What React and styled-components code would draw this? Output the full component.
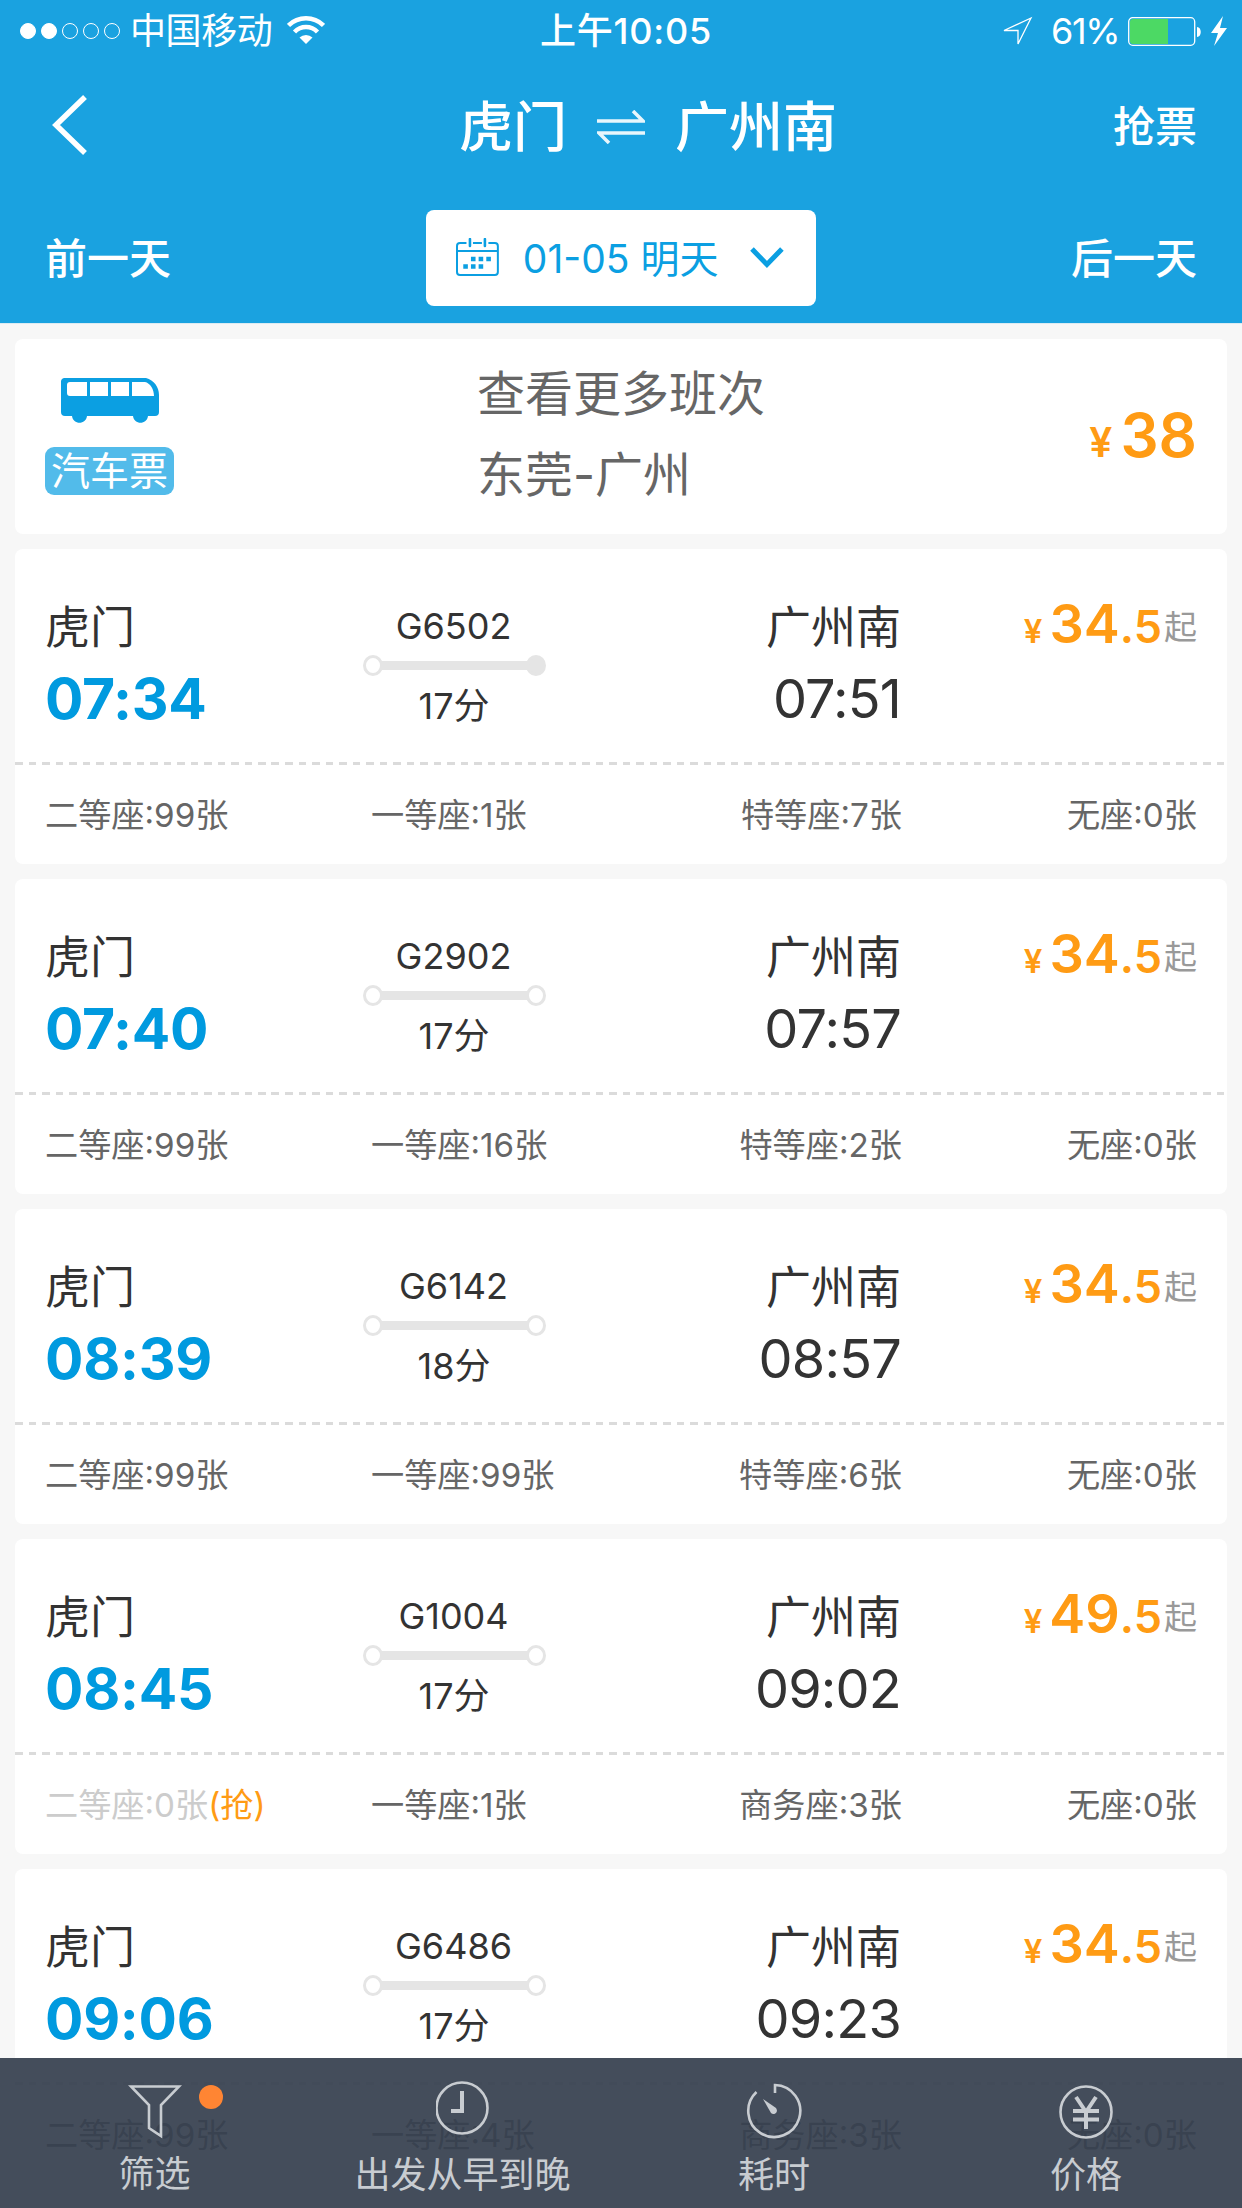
import React from 'react'
import styled, { createGlobalStyle } from 'styled-components'

const GlobalStyle = createGlobalStyle`
  *,
  *::before,
  *::after {
    box-sizing: border-box;
  }
  body {
    margin: 0;
    background: #f7f7f7;
    font-family: Inter, "Noto Sans CJK SC", sans-serif;
    overflow: hidden;
  }
`

const Screen = styled.div`
  position: relative;
  width: 1242px;
  height: 2208px;
  overflow: hidden;
  background: #f7f7f7;
`

const Header = styled.header`
  height: 324px;
  background: #1aa2e0;
  border-bottom: 1px solid #dcebf2;
  color: #fff;
`

const StatusBar = styled.div`
  display: grid;
  grid-template-columns: 1fr auto 1fr;
  align-items: center;
  height: 62px;
  padding: 0 14px 0 20px;
  font-size: 36px;
  line-height: 62px;
`

const Carrier = styled.div`
  display: flex;
  align-items: center;
  letter-spacing: -0.4px;
`

const Signal = styled.div`
  display: flex;
  gap: 5px;
  margin-right: 10px;
`

const Dot = styled.i`
  width: 16px;
  height: 16px;
  border: 1px solid #fff;
  border-radius: 50%;
  background: ${(props) => (props.$on ? '#fff' : 'transparent')};
`

const Clock = styled.div`
  padding-left: 4px;
  font-weight: 500;
  letter-spacing: 0.8px;
`

const Power = styled.div`
  display: flex;
  align-items: center;
  justify-content: flex-end;
`

const Percent = styled.span`
  width: 68px;
  margin: 0 9px 0 18px;
  letter-spacing: -1.3px;
  white-space: nowrap;
`

const TitleBar = styled.div`
  display: flex;
  align-items: center;
  justify-content: space-between;
  height: 128px;
  padding: 0 45px 0 50px;
  font-weight: 500;
`

const Side = styled.div`
  display: flex;
  width: 200px;
  padding-bottom: ${(props) => (props.$icon ? 2 : 6)}px;
  justify-content: ${(props) => (props.$right ? 'flex-end' : 'flex-start')};
  font-size: 42px;
  font-weight: 500;
`

const Route = styled.div`
  display: flex;
  align-items: center;
  padding: 3px 0 0 49px;
  font-size: 54px;
  line-height: 60px;

  svg {
    margin: 0 30px 2px 30px;
  }
`

const DayBar = styled.div`
  display: flex;
  align-items: center;
  justify-content: space-between;
  height: 96px;
  margin-top: 20px;
  padding: 0 45px;
`

const DatePicker = styled.div`
  display: flex;
  align-items: center;
  width: 390px;
  height: 96px;
  padding: 0 32px 0 30px;
  border-radius: 8px;
  background: #fff;
  color: #0b9fe2;
  font-size: 39px;
  white-space: nowrap;

  span {
    width: 228px;
    margin-left: 24px;
    padding-bottom: 4px;
  }
  svg {
    margin-bottom: 1px;
  }
`

const List = styled.main`
  display: flex;
  flex-direction: column;
  gap: 15px;
  padding: 15px;
`

const Card = styled.section`
  flex: none;
  border-radius: 8px;
  background: #fff;
`

const BusCard = styled(Card)`
  display: grid;
  grid-template-columns: 432px 1fr auto;
  height: 195px;
  padding: 0 30px;
`

const BusTag = styled.div`
  display: flex;
  flex-direction: column;
  align-items: center;
  width: 129px;
  padding-top: 39px;
`

const Badge = styled.div`
  width: 129px;
  height: 48px;
  margin-top: 24px;
  border-radius: 9px;
  background: #52bbea;
  color: #fff;
  font-size: 39px;
  line-height: 48px;
  text-align: center;
`

const BusText = styled.div`
  padding-top: 14px;
  color: #666;
  font-size: 48px;
  line-height: 81px;
`

const Price = styled.div`
  display: flex;
  align-items: baseline;
  justify-content: flex-end;
  color: #ff9b14;
  font-weight: 600;
  line-height: 60px;
`

const BusPrice = styled(Price)`
  padding-top: 66px;
  font-size: 60px;
`

const Yen = styled.span`
  margin-right: ${(props) => (props.$big ? 8 : 7)}px;
  font-size: ${(props) => (props.$big ? 41 : 33)}px;
`

const TrainCard = styled(Card)`
  height: 315px;
`

const Trip = styled.div`
  display: grid;
  grid-template-columns: 300px 250px 306px 1fr;
  height: 213px;
  padding: 43px 30px 0;
  color: #333;
`

const Stop = styled.div`
  text-align: ${(props) => (props.$arrive ? 'right' : 'left')};
  font-size: 45px;
  line-height: 72px;
`

const Time = styled.div`
  color: ${(props) => (props.$depart ? '#009adf' : '#333')};
  font-size: ${(props) => (props.$depart ? 57 : 54)}px;
  font-weight: ${(props) => (props.$depart ? 700 : 400)};
  letter-spacing: ${(props) => (props.$depart ? -0.3 : -0.8)}px;
  line-height: 69px;
  white-space: nowrap;
`

const Ride = styled.div`
  display: flex;
  flex-direction: column;
  align-items: center;
  width: 183px;
  margin-left: 18px;
  padding-top: 9px;
  font-size: 36px;
  line-height: 50px;
`

const TrainNo = styled.div`
  margin-left: -2px;
`

const Track = styled.div`
  display: flex;
  align-items: center;
  width: 183px;
  height: 21px;
  margin: 4px 0 5px;

  &::before,
  &::after {
    content: '';
    width: 20px;
    height: 21px;
    border: 3px solid #e5e5e5;
    border-radius: 50%;
  }
  &::after {
    background: ${(props) => (props.$terminal ? '#e5e5e5' : '#fff')};
  }
  i {
    flex: 1;
    height: 9px;
    margin: 0 -1px;
    background: #e5e5e5;
  }
`

const Minutes = styled.div`
  margin-left: -1px;
`

const TrainPrice = styled(Price)`
  height: 72px;
  padding-top: 2px;
  font-size: 54px;

  small {
    font-size: 45px;
  }
`

const From = styled.span`
  position: relative;
  top: -4px;
  margin-left: 2px;
  color: #999;
  font-size: 33px;
  font-weight: 400;
`

const Dashes = styled.div`
  height: 3px;
  background: repeating-linear-gradient(90deg, #dbdbdb 0 7.5px, transparent 7.5px 13.5px);
`

const Seats = styled.div`
  display: grid;
  grid-template-columns: 326px 1fr 1fr 295px;
  height: 99px;
  padding: 0 30px;
  color: #666;
  font-size: 33.2px;
  line-height: 101px;
  white-space: nowrap;
`

const Seat = styled.div`
  text-align: ${(props) => (props.$right ? 'right' : 'left')};
  color: ${(props) => (props.$soldOut ? '#ccc' : 'inherit')};
`

const Grab = styled.span`
  color: #ff9b14;
`

const TabBar = styled.nav`
  position: absolute;
  left: 0;
  bottom: 0;
  display: grid;
  grid-template-columns: 309px 307px 316px 308px;
  width: 100%;
  height: 150px;
  background: rgba(54, 63, 79, 0.93);
  color: #c8ccd1;
`

const Tab = styled.div`
  position: relative;
  display: flex;
  flex-direction: column;
  align-items: center;
  padding-top: ${(props) => props.$top}px;
  font-size: 36px;
  line-height: 50px;

  svg {
    margin-bottom: ${(props) => props.$gap || 10}px;
  }
`

const Unread = styled.i`
  position: absolute;
  top: 27px;
  left: 199px;
  width: 24px;
  height: 24px;
  border-radius: 50%;
  background: #ff8533;
`

const WifiIcon = styled((props) => (
  <svg {...props} width="38" height="28" viewBox="0 0 38 28" fill="none" stroke="#fff">
    <path d="M1.5 9.5a25 25 0 0 1 35 0" strokeWidth="4.5" />
    <path d="M7.5 16a16 16 0 0 1 23 0" strokeWidth="4.5" />
    <path d="M12.5 21.5a9.5 9.5 0 0 1 13 0L19 28z" fill="#fff" stroke="none" />
  </svg>
))`
  margin: 0 0 2px 15px;
`

const LocationIcon = () => (
  <svg width="31" height="31" viewBox="0 0 31 31" fill="none" stroke="#fff" strokeWidth="1.3">
    <path d="M29 2L16 28V14.5H2z" />
  </svg>
)

const BatteryIcon = () => (
  <svg width="100" height="31" viewBox="0 0 100 31">
    <rect x="0.7" y="1.7" width="66" height="27.6" rx="4" fill="none" stroke="#fff" strokeWidth="1.3" />
    <path d="M5 3h35v25H5a3 3 0 0 1-3-3V6a3 3 0 0 1 3-3z" fill="#4cd964" />
    <path d="M69 11c5 0 5 10 0 10z" fill="#fff" />
    <path d="M95 0L83 17h7l-4 13 13-18h-7z" fill="#fff" />
  </svg>
)

const BackIcon = () => (
  <svg width="40" height="60" viewBox="0 0 40 60" fill="none" stroke="#fff" strokeWidth="5.5">
    <path d="M35 2L6 30l29 28" />
  </svg>
)

const SwapIcon = () => (
  <svg width="48" height="34" viewBox="0 0 48 34" fill="none" stroke="#fff" strokeWidth="3.5" strokeOpacity="0.9">
    <path d="M0 11h46L36 1" />
    <path d="M48 23H2l10 10" />
  </svg>
)

const CalendarIcon = () => (
  <svg width="43" height="39" viewBox="0 0 43 39" fill="none" stroke="#0b9fe2" strokeWidth="2">
    <path d="M10.5 5H4a3 3 0 0 0-3 3v26a3 3 0 0 0 3 3h35a3 3 0 0 0 3-3V8a3 3 0 0 0-3-3h-6.500M17 5h9M1 13h41" />
    <path d="M14 1v7M29 1v7" strokeWidth="2.6" strokeLinecap="round" />
    <path d="M15 21h20M7.3 28.5h20" strokeWidth="4.6" strokeDasharray="4.6 3.1" />
  </svg>
)

const DownIcon = () => (
  <svg width="34" height="22" viewBox="0 0 34 22" fill="none" stroke="#0b9fe2" strokeWidth="5">
    <path d="M2 2l15 15.5L32 2" />
  </svg>
)

const BusIcon = () => (
  <svg width="98" height="45" viewBox="0 0 98 45">
    <path d="M3 0h82c8 2 13 9 13 17v17a4 4 0 0 1-4 4h-7c-1 9-14 9-15 0H26c-1 9-14 9-15 0H4a4 4 0 0 1-4-4V4a4 4 0 0 1 3-4z" fill="#0b9fe2" />
    <path d="M9 4h17v14H9a3 3 0 0 1-3-3V7a3 3 0 0 1 3-3zM29 4h18v14H29zM50 4h18v14H50zM71 4h13c5 1 9 7 9 14H71z" fill="#fff" />
  </svg>
)

const FunnelIcon = () => (
  <svg width="54" height="54" viewBox="0 0 54 54" fill="none" stroke="currentColor" strokeWidth="2.6">
    <path d="M3 1.5h48L33 20v31l-12-8V20z" />
  </svg>
)

const ClockIcon = () => (
  <svg width="54" height="54" viewBox="0 0 54 54" fill="none" stroke="currentColor" strokeWidth="2.6">
    <circle cx="26" cy="27" r="25.5" />
    <path d="M26 10v20H15" strokeWidth="4" />
  </svg>
)

const TimerIcon = () => (
  <svg width="56" height="56" viewBox="0 0 56 56" fill="none" stroke="currentColor" strokeWidth="2.6">
    <path d="M29 10V2a26 26 0 1 1-18.5 7" />
    <path d="M17 16l13 9c3 4-2 8-5 5z" fill="currentColor" stroke="none" />
  </svg>
)

const YuanIcon = () => (
  <svg width="54" height="54" viewBox="0 0 54 54" fill="none" stroke="currentColor" strokeWidth="2.6">
    <circle cx="27" cy="27" r="25.5" />
    <path d="M17 12l10 15 10-15M27 26v18M14 26h26M14 34.5h26" strokeWidth="4" />
  </svg>
)

const trains = [
  { no: 'G6502', depart: '07:34', arrive: '07:51', minutes: 17, price: '34', terminal: true, seats: ['二等座:99张', '一等座:1张', '特等座:7张'] },
  { no: 'G2902', depart: '07:40', arrive: '07:57', minutes: 17, price: '34', seats: ['二等座:99张', '一等座:16张', '特等座:2张'] },
  { no: 'G6142', depart: '08:39', arrive: '08:57', minutes: 18, price: '34', seats: ['二等座:99张', '一等座:99张', '特等座:6张'] },
  { no: 'G1004', depart: '08:45', arrive: '09:02', minutes: 17, price: '49', soldOut: true, seats: ['二等座:0张', '一等座:1张', '商务座:3张'] },
  { no: 'G6486', depart: '09:06', arrive: '09:23', minutes: 17, price: '34', seats: ['二等座:99张', '一等座:4张', '商务座:3张'] },
]

const Train = ({ train }) => (
  <TrainCard>
    <Trip>
      <Stop>
        虎门
        <Time $depart>{train.depart}</Time>
      </Stop>
      <Ride>
        <TrainNo>{train.no}</TrainNo>
        <Track $terminal={train.terminal}><i /></Track>
        <Minutes>{train.minutes}分</Minutes>
      </Ride>
      <Stop $arrive>
        广州南
        <Time>{train.arrive}</Time>
      </Stop>
      <TrainPrice>
        <Yen>¥</Yen>
        {train.price}
        <small>.5</small>
        <From>起</From>
      </TrainPrice>
    </Trip>
    <Dashes />
    <Seats>
      <Seat $soldOut={train.soldOut}>
        {train.seats[0]}
        {train.soldOut && <Grab>(抢)</Grab>}
      </Seat>
      <Seat>{train.seats[1]}</Seat>
      <Seat $right>{train.seats[2]}</Seat>
      <Seat $right>无座:0张</Seat>
    </Seats>
  </TrainCard>
)

const App = () => (
  <Screen>
    <GlobalStyle />
    <Header>
      <StatusBar>
        <Carrier>
          <Signal>
            {[1, 1, 0, 0, 0].map((on, i) => <Dot key={i} $on={on} />)}
          </Signal>
          中国移动
          <WifiIcon />
        </Carrier>
        <Clock>上午10:05</Clock>
        <Power>
          <LocationIcon />
          <Percent>61%</Percent>
          <BatteryIcon />
        </Power>
      </StatusBar>
      <TitleBar>
        <Side $icon><BackIcon /></Side>
        <Route>
          虎门
          <SwapIcon />
          广州南
        </Route>
        <Side $right>抢票</Side>
      </TitleBar>
      <DayBar>
        <Side>前一天</Side>
        <DatePicker>
          <CalendarIcon />
          <span>01-05 明天</span>
          <DownIcon />
        </DatePicker>
        <Side $right>后一天</Side>
      </DayBar>
    </Header>
    <List>
      <BusCard>
        <BusTag>
          <BusIcon />
          <Badge>汽车票</Badge>
        </BusTag>
        <BusText>
          <div>查看更多班次</div>
          <div>东莞-广州</div>
        </BusText>
        <BusPrice>
          <Yen $big>¥</Yen>
          38
        </BusPrice>
      </BusCard>
      {trains.map((train) => <Train key={train.no} train={train} />)}
    </List>
    <TabBar>
      <Tab $top={27}>
        <FunnelIcon />
        <Unread />
        筛选
      </Tab>
      <Tab $top={23} $gap={15}>
        <ClockIcon />
        出发从早到晚
      </Tab>
      <Tab $top={25} $gap={11}>
        <TimerIcon />
        耗时
      </Tab>
      <Tab $top={27} $gap={11}>
        <YuanIcon />
        价格
      </Tab>
    </TabBar>
  </Screen>
)

export default App
